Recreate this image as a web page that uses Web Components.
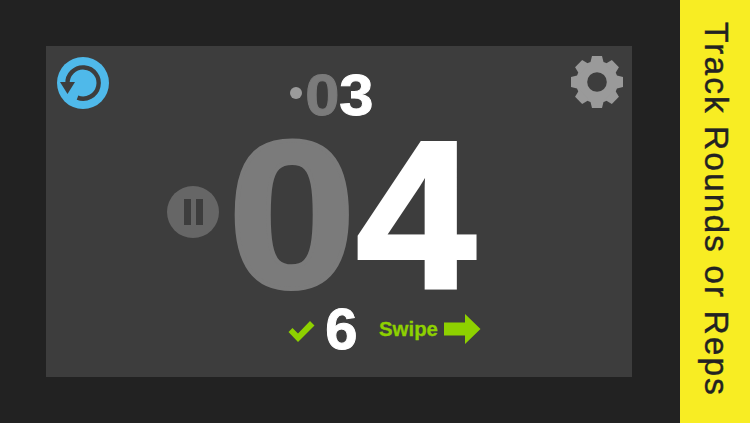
<!DOCTYPE html>
<html><head><meta charset="utf-8">
<style>
html,body{margin:0;padding:0;background:#222;}
body{width:750px;height:423px;overflow:hidden;font-family:"Liberation Sans",Arial,sans-serif;}
</style></head>
<body>
<app-screen>
  <timer-panel>
    <top-row>
      <refresh-icon slot="left"></refresh-icon>
      <round-counter slot="mid"></round-counter>
      <gear-icon slot="right"></gear-icon>
    </top-row>
    <main-row></main-row>
    <done-row></done-row>
  </timer-panel>
  <side-banner>Track Rounds or Reps</side-banner>
</app-screen>
<script>
function def(name,html){
  customElements.define(name,class extends HTMLElement{
    constructor(){super();this.attachShadow({mode:'open'}).innerHTML=html;}
  });
}
def('app-screen',`<style>:host{display:flex;width:750px;height:423px;background:#222;}
.m{flex:1;padding:46px 48px 46px 46px;box-sizing:border-box;display:flex}</style>
<div class="m"><slot></slot></div><slot name="x"></slot>`);
def('timer-panel',`<style>:host{display:flex;flex-direction:column;width:586px;height:331px;background:#3d3d3d;padding:11px 9px 0 11px;box-sizing:border-box;}</style><slot></slot>`);
def('top-row',`<style>:host{display:flex;height:76px;align-items:flex-start;justify-content:space-between;}
.mid{margin-top:15px}</style><slot name="left"></slot><div class="mid"><slot name="mid"></slot></div><slot name="right"></slot>`);
def('refresh-icon',`<style>:host{display:block;width:52px;height:52px}svg{display:block}</style>
<svg width="52" height="52" viewBox="0 0 52 52">
<circle cx="26" cy="26" r="26" fill="#4fb9ea"/>
<path d="M10.5 27 A15.6 15.6 0 1 1 20.5 40.6" fill="none" stroke="#3d3d3d" stroke-width="4.4"/>
<path d="M3 25 L18 25 L10.5 37 Z" fill="#3d3d3d"/>
</svg>`);
def('gear-icon',`<style>:host{display:block;width:52px;height:52px;margin-top:-1px}svg{display:block}</style>
<svg width="52" height="52" viewBox="0 0 52 52">
<g fill="#9a9a9a"><circle cx="26" cy="26" r="21"/>
${[0,45,90,135,180,225,270,315].map(a=>`<path transform="rotate(${a} 26 26)" d="M21 0 L31 0 L33 8 L19 8 Z"/>`).join('')}
</g><circle cx="26" cy="26" r="9.8" fill="#3d3d3d"/></svg>`);
def('round-counter',`<style>:host{display:flex;align-items:center;margin-right:17px;font:bold 58px/45px "Liberation Sans",Arial,sans-serif;color:#fff;-webkit-text-stroke:1px currentColor}
.dot{width:12px;height:12px;border-radius:50%;background:#9b9b9b;margin-right:3px;margin-top:-3px}
b{display:inline-block;width:34.5px;text-align:center;transform:scaleX(1.06);transform-origin:center;font-weight:bold}
.z{color:#7b7b7b}</style><span class="dot"></span><b class="z">0</b><b>3</b>`);
def('main-row',`<style>:host{display:flex;align-items:center;height:164px;margin-left:110px;font:bold 210px/164px "Liberation Sans",Arial,sans-serif;color:#fff;-webkit-text-stroke:4px currentColor}
.p{width:52px;height:52px;border-radius:50%;background:#666;display:flex;justify-content:center;gap:5px;align-items:center;margin-right:11px;margin-top:-7px;-webkit-text-stroke:0}
.p i{display:block;width:7px;height:26px;background:#3d3d3d}
b{display:block;width:124px;text-align:center;transform:scaleX(1.1);font-weight:bold;margin-top:-1px}
b+b{transform:scaleX(1.02)}
.z{color:#7b7b7b}</style><span class="p"><i></i><i></i></span><b class="z">0</b><b>4</b>`);
def('done-row',`<style>:host{display:flex;align-items:center;height:47px;margin-top:8px;margin-left:231px;color:#fff;}
svg{display:block}
.s{display:block;width:35px;text-align:center;font:bold 58px/47px "Liberation Sans",Arial,sans-serif;margin:0 20px 0 9px;-webkit-text-stroke:1px currentColor}
.w{font:bold 20.4px/24px "Liberation Sans",Arial,sans-serif;color:#8ed100;margin-right:6px;-webkit-text-stroke:.3px currentColor}</style>
<svg width="27" height="21" viewBox="0 0 27 21" style="margin-top:5px"><path d="M0.5 11 L4.5 7 L10 12.5 L22 0 L26.5 4.5 L10 21 Z" fill="#8ed100"/></svg>
<span class="s">6</span><span class="w">Swipe</span>
<svg width="37" height="30" viewBox="0 0 37 30" style="margin-top:1px"><path d="M0 8.5 L21 8.5 L21 0 L36.5 15 L21 30 L21 21.5 L0 21.5 Z" fill="#8ed100"/></svg>`);
def('side-banner',`<style>:host{display:flex;align-items:center;justify-content:flex-start;width:70px;height:423px;background:#f8ed23;color:#222;writing-mode:vertical-rl;font:33.5px/1 "Liberation Sans",Arial,sans-serif;white-space:nowrap;letter-spacing:2.05px;-webkit-text-stroke:.4px currentColor;padding:22px 0 0 3px;box-sizing:border-box}</style><slot></slot>`);
document.querySelector('side-banner').slot='x';
</script>
</body></html>
